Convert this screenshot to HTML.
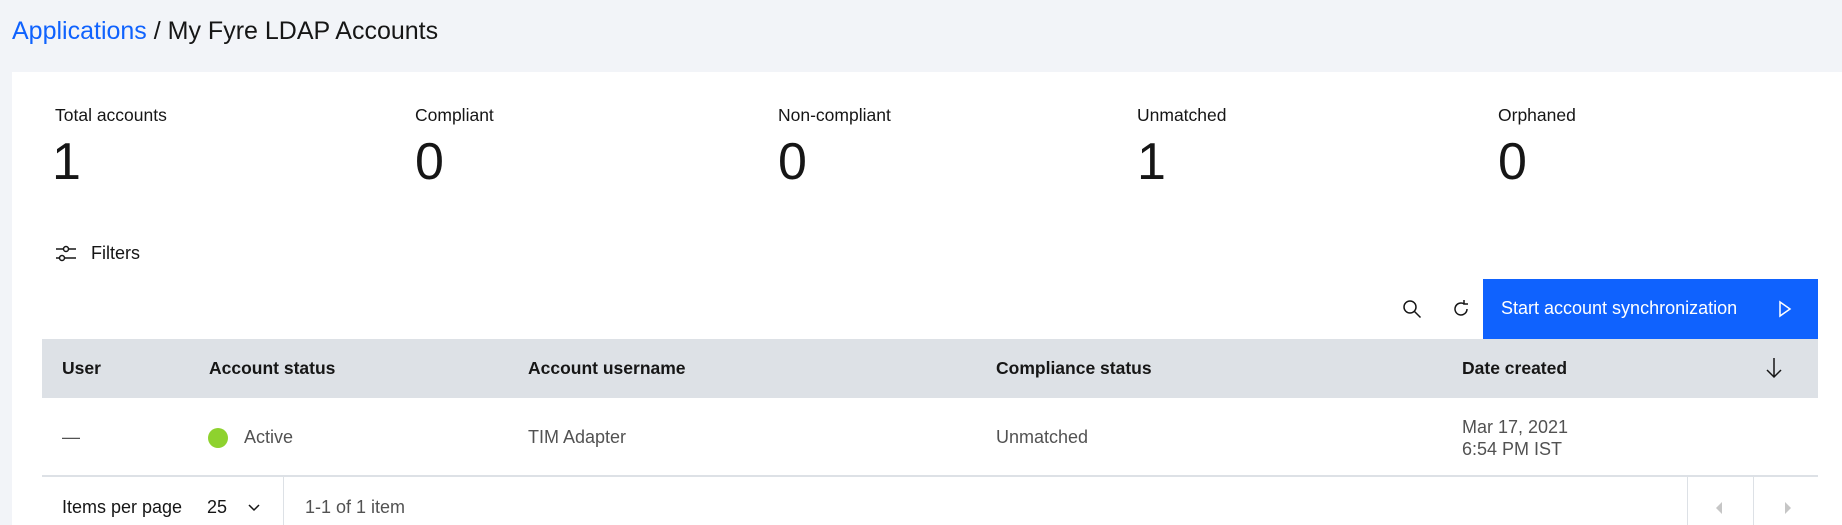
<!DOCTYPE html>
<html><head><meta charset="utf-8"><style>
*{margin:0;padding:0;box-sizing:border-box}
body{width:1842px;height:525px;background:#f2f4f8;font-family:"Liberation Sans",sans-serif;color:#161616;position:relative;overflow:hidden}
.a{position:absolute;white-space:nowrap}
.card{position:absolute;left:12px;top:72px;width:1830px;height:453px;background:#fff}
.lbl{font-size:17.5px;top:105px;color:#161616}
.num{font-size:52px;font-weight:300;top:132px;line-height:60px}
.th{font-size:17.5px;font-weight:bold;top:358px}
.td{font-size:18px;color:#525252;top:427px}
</style></head><body>
<div class="a" style="left:12px;top:17px;font-size:25px"><span style="color:#0f62fe">Applications</span> / My Fyre LDAP Accounts</div>
<div class="card"></div>
<div class="a lbl" style="left:55px">Total accounts</div>
<div class="a lbl" style="left:415px">Compliant</div>
<div class="a lbl" style="left:778px">Non-compliant</div>
<div class="a lbl" style="left:1137px">Unmatched</div>
<div class="a lbl" style="left:1498px">Orphaned</div>
<div class="a num" style="left:52px">1</div>
<div class="a num" style="left:415px">0</div>
<div class="a num" style="left:778px">0</div>
<div class="a num" style="left:1137px">1</div>
<div class="a num" style="left:1498px">0</div>
<svg class="a" style="left:55px;top:245px" width="22" height="18" viewBox="0 0 22 18" fill="none" stroke="#161616" stroke-width="1.5"><path d="M1 4h7M14 4h7M1 13h3M10 13h11"/><circle cx="11" cy="4" r="2.5"/><circle cx="7" cy="13" r="2.5"/></svg>
<div class="a" style="left:91px;top:243px;font-size:18px">Filters</div>
<svg class="a" style="left:1402px;top:299px" width="20" height="20" viewBox="0 0 20 20" fill="none" stroke="#161616" stroke-width="1.5"><circle cx="8" cy="8" r="6"/><path d="M12.5 12.5l6 6"/></svg>
<svg class="a" style="left:1452px;top:299px" width="20" height="20" viewBox="0 0 20 20" fill="none" stroke="#161616" stroke-width="1.5"><path d="M15 10a6 6 0 1 1-3-5.2"/><path d="M12 1v4h4"/></svg>
<div class="a" style="left:1483px;top:279px;width:335px;height:60px;background:#0f62fe"></div>
<div class="a" style="left:1501px;top:298px;font-size:18px;color:#fff">Start account synchronization</div>
<svg class="a" style="left:1777px;top:299px" width="16" height="20" viewBox="0 0 16 20" fill="none" stroke="#fff" stroke-width="1.5"><path d="M3 3l10 7-10 7z"/></svg>
<div class="a" style="left:42px;top:339px;width:1776px;height:59px;background:#dde1e6"></div>
<div class="a th" style="left:62px">User</div>
<div class="a th" style="left:209px">Account status</div>
<div class="a th" style="left:528px">Account username</div>
<div class="a th" style="left:996px">Compliance status</div>
<div class="a th" style="left:1462px">Date created</div>
<svg class="a" style="left:1765px;top:357px" width="18" height="22" viewBox="0 0 18 22" fill="none" stroke="#161616" stroke-width="1.5"><path d="M9 1v19M2 13l7 7 7-7"/></svg>
<div class="a td" style="left:62px">—</div>
<div class="a" style="left:208px;top:428px;width:20px;height:20px;border-radius:50%;background:#8ed22e"></div>
<div class="a td" style="left:244px">Active</div>
<div class="a td" style="left:528px">TIM Adapter</div>
<div class="a td" style="left:996px">Unmatched</div>
<div class="a" style="left:1462px;top:416px;font-size:18px;color:#525252;line-height:22px">Mar 17, 2021<br>6:54 PM IST</div>
<div class="a" style="left:42px;top:475px;width:1776px;height:2px;background:#dde1e6"></div>
<div class="a" style="left:62px;top:497px;font-size:18px">Items per page</div>
<div class="a" style="left:207px;top:497px;font-size:18px">25</div>
<svg class="a" style="left:247px;top:503px" width="14" height="10" viewBox="0 0 14 10" fill="none" stroke="#161616" stroke-width="1.5"><path d="M2 2l5 5 5-5"/></svg>
<div class="a" style="left:283px;top:477px;width:1px;height:48px;background:#dde1e6"></div>
<div class="a" style="left:305px;top:497px;font-size:18px;color:#525252">1-1 of 1 item</div>
<div class="a" style="left:1687px;top:477px;width:1px;height:48px;background:#dde1e6"></div>
<div class="a" style="left:1753px;top:477px;width:1px;height:48px;background:#dde1e6"></div>
<svg class="a" style="left:1714px;top:501px" width="10" height="14"><path d="M8 1L2 7l6 6z" fill="#c6c6c6"/></svg>
<svg class="a" style="left:1783px;top:501px" width="10" height="14"><path d="M2 1l6 6-6 6z" fill="#c6c6c6"/></svg>
</body></html>
